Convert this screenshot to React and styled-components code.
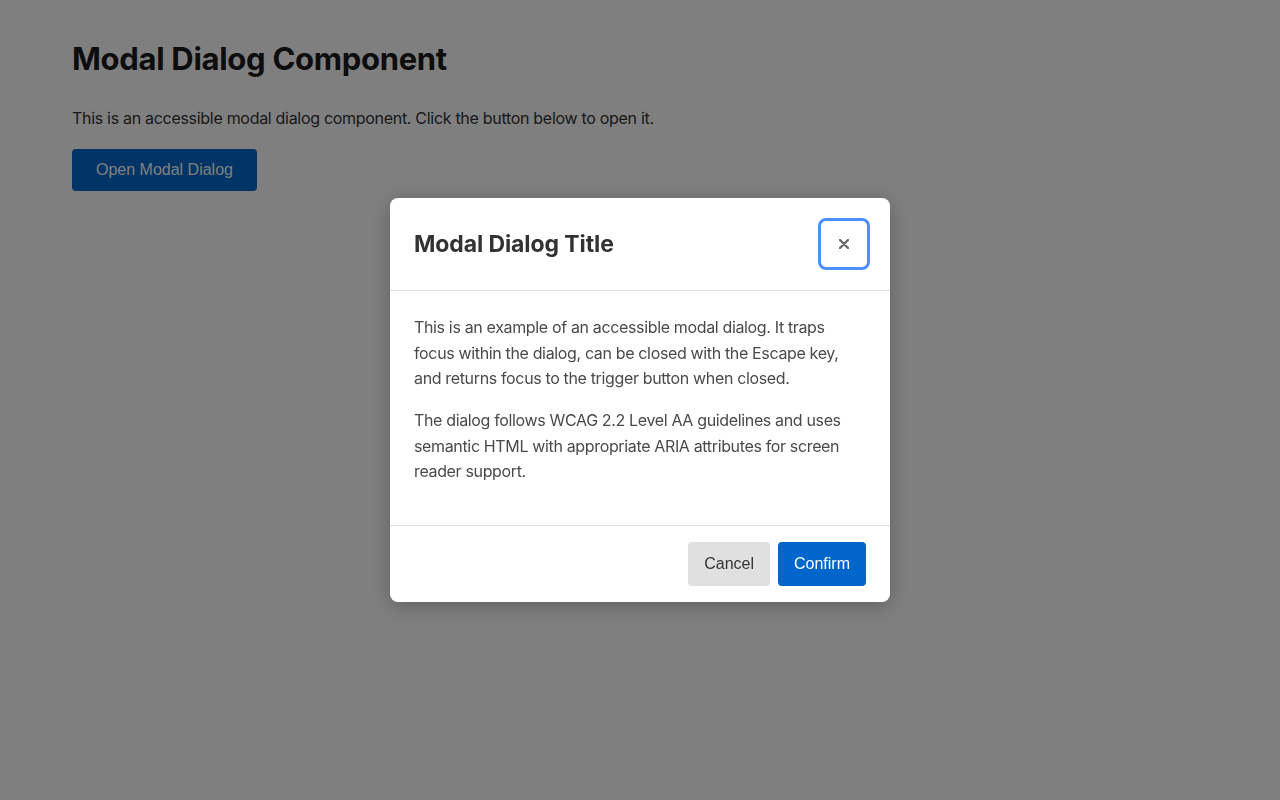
import React from "react";
import styled, { createGlobalStyle } from "styled-components";

const Global = createGlobalStyle`
  html, body { margin: 0; padding: 0; background: #ffffff; }
  body { font-family: Inter, "Noto Sans", sans-serif; color: #333; }
  * { box-sizing: border-box; }
`;

const Page = styled.main`
  padding: 40px 72px;
`;

const Heading = styled.h1`
  margin: 0 0 29px;
  font-size: 31px;
  line-height: 1.2;
  font-weight: 700;
  color: #1a1a1a;
  letter-spacing: -0.3px;
`;

const Lead = styled.p`
  margin: 0 0 17px;
  font-size: 16px;
  line-height: 1.6;
  color: #333;
  letter-spacing: -0.3px;
`;

const Button = styled.button`
  font-family: "Liberation Sans", Arial, sans-serif;
  font-size: 16px;
  line-height: 18px;
  border: none;
  border-radius: 4px;
  cursor: pointer;
  height: ${(p) => (p.$tall ? "44px" : "42px")};
  padding: 0 ${(p) => (p.$wide ? "24px" : "16px")};
  background: ${(p) => (p.$variant === "secondary" ? "#e0e0e0" : "#0066cc")};
  color: ${(p) => (p.$variant === "secondary" ? "#333333" : "#ffffff")};
`;

const Overlay = styled.div`
  position: fixed;
  inset: 0;
  background: rgba(0, 0, 0, 0.5);
  display: flex;
  align-items: center;
  justify-content: center;
`;

const Dialog = styled.div`
  width: 500px;
  background: #fff;
  border-radius: 8px;
  box-shadow: 0 4px 20px rgba(0, 0, 0, 0.25);
  display: flex;
  flex-direction: column;
`;

const Header = styled.header`
  display: flex;
  align-items: center;
  justify-content: space-between;
  padding: 24px;
  border-bottom: 1px solid #e0e0e0;
`;

const Title = styled.h2`
  margin: 0;
  font-size: 23px;
  font-weight: 700;
  color: #333;
  letter-spacing: -0.1px;
`;

const Close = styled.button`
  width: 44px;
  height: 44px;
  border: none;
  background: transparent;
  border-radius: 4px;
  outline: 3px solid #4d90fe;
  outline-offset: 1px;
  display: flex;
  align-items: center;
  justify-content: center;
  color: #666;
  cursor: pointer;
  padding: 0;
`;

const Body = styled.div`
  padding: 24px;
`;

const Para = styled.p`
  margin: 0 0 16px;
  font-size: 16px;
  line-height: 1.6;
  color: #4a4a4a;
  letter-spacing: -0.35px;
`;

const Footer = styled.footer`
  display: flex;
  justify-content: flex-end;
  gap: 8px;
  padding: 16px 24px;
  border-top: 1px solid #e0e0e0;
`;

export default function App() {
  return (
    <>
      <Global />
      <Page>
        <Heading>Modal Dialog Component</Heading>
        <Lead>This is an accessible modal dialog component. Click the button below to open it.</Lead>
        <Button $wide>Open Modal Dialog</Button>
      </Page>
      <Overlay>
        <Dialog role="dialog" aria-modal="true" aria-labelledby="t">
          <Header>
            <Title id="t">Modal Dialog Title</Title>
            <Close aria-label="Close">
              <svg width="10" height="10" viewBox="0 0 10 10">
                <path d="M1 1 L9 9 M9 1 L1 9" stroke="currentColor" strokeWidth="2.3" strokeLinecap="round" />
              </svg>
            </Close>
          </Header>
          <Body>
            <Para>
              This is an example of an accessible modal dialog. It traps focus within the dialog, can be closed with the Escape key, and returns focus to the trigger button when closed.
            </Para>
            <Para>
              The dialog follows WCAG 2.2 Level AA guidelines and uses semantic HTML with appropriate ARIA attributes for screen reader support.
            </Para>
          </Body>
          <Footer>
            <Button $tall $variant="secondary">Cancel</Button>
            <Button $tall>Confirm</Button>
          </Footer>
        </Dialog>
      </Overlay>
    </>
  );
}
